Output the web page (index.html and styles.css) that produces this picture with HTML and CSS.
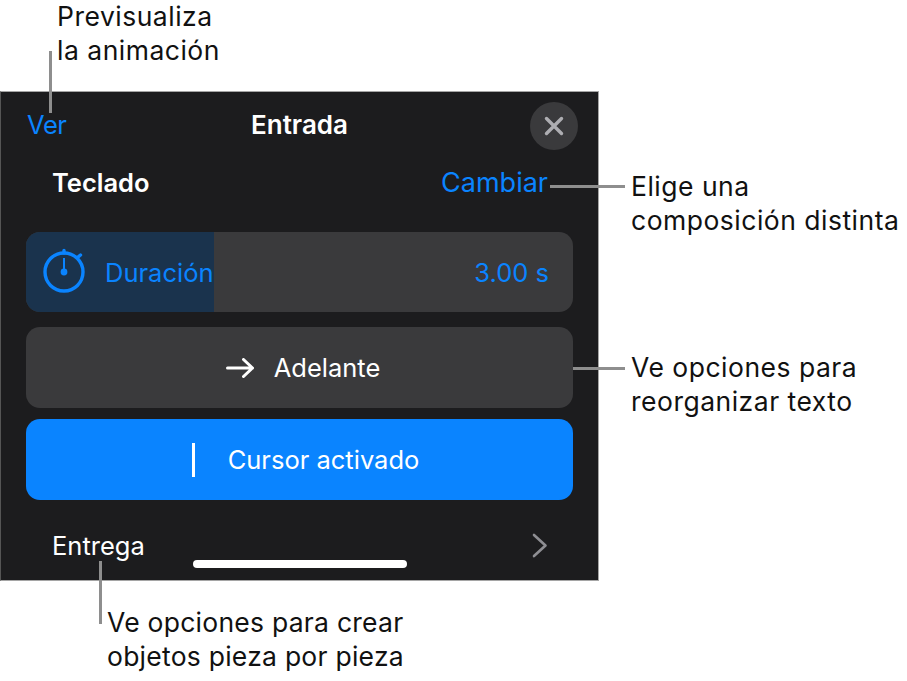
FILE: index.html
```html
<!DOCTYPE html>
<html lang="es">
<head>
  <meta charset="UTF-8">
  <meta name="viewport" content="width=device-width, initial-scale=1.0">
  <title>Entrada</title>
  <link rel="stylesheet" href="styles.css">
</head>
<body>
  <div class="figure">
    <p class="note note-top">Previsualiza<br>la animación</p>

    <div class="panel">
      <div class="header">
        <span class="link header-link">Ver</span>
        <span class="title">Entrada</span>
        <span class="close">
          <svg width="22" height="22" viewBox="0 0 22 22"><path d="M3.5 3.5l15 15M18.5 3.5l-15 15" fill="none" stroke="#aeaeb2" stroke-width="3.4" stroke-linecap="round"/></svg>
        </span>
      </div>

      <div class="subheader">
        <span class="subtitle">Teclado</span>
        <span class="link change-link">Cambiar</span>
      </div>

      <div class="row row-duration">
        <div class="fill" style="width: 188px"></div>
        <svg class="stopwatch" width="46" height="48" viewBox="0 0 46 48">
          <circle cx="23" cy="26" r="19" fill="none" stroke="#0a84ff" stroke-width="3.4"/>
          <path d="M23 4.500v2.500M36.500 11.500l3-2.500" fill="none" stroke="#0a84ff" stroke-width="3.4" stroke-linecap="round"/>
          <path d="M23 12v14" fill="none" stroke="#0a84ff" stroke-width="2"/>
          <circle cx="23" cy="26" r="3.400" fill="#0a84ff"/>
        </svg>
        <span class="link duration-label">Duración</span>
        <span class="link duration-value">3.00 s</span>
      </div>

      <div class="row row-forward">
        <svg width="28" height="20" viewBox="0 0 28 20"><path d="M1.5 10h25M17.5 1.5l9 8.500-9 8.500" fill="none" stroke="#fff" stroke-width="3" stroke-linecap="round" stroke-linejoin="round"/></svg>
        <span>Adelante</span>
      </div>

      <div class="row row-cursor">
        <span class="cursor-bar"></span>
        <span>Cursor activado</span>
      </div>

      <div class="footer">
        <span>Entrega</span>
        <svg width="16" height="25" viewBox="0 0 16 25"><path d="M2 2l11.500 10.500L2 23" fill="none" stroke="#8e8e93" stroke-width="2.600" stroke-linecap="round" stroke-linejoin="round"/></svg>
      </div>

      <div class="home-bar"></div>
    </div>

    <p class="note note-bottom">Ve opciones para crear<br>objetos pieza por pieza</p>

    <p class="note note-side note-layout">Elige una<br>composición distinta</p>
    <p class="note note-side note-reflow">Ve opciones para<br>reorganizar texto</p>

    <span class="leader leader-ver"></span>
    <span class="leader leader-change"></span>
    <span class="leader leader-forward"></span>
    <span class="leader leader-build"></span>
  </div>
</body>
</html>
```

FILE: styles.css
```css
body { margin: 0; background: #fff; font-family: Inter, "Liberation Sans", sans-serif; }
.figure { position: relative; width: 907px; height: 681px; overflow: hidden; }

.note { margin: 0; font-size: 26.500px; line-height: 34px; letter-spacing: 0.5px; color: #111; }
.note-top { margin-top: -1px; padding-left: 57px; }
.note-bottom { margin-top: 24px; padding-left: 107px; letter-spacing: 0.25px; }
.note-side { position: absolute; left: 631px; }
.note-layout { top: 169px; }
.note-reflow { top: 350px; }

.leader { position: absolute; background: #8e8e8e; }
.leader-ver { left: 49px; top: 51px; width: 3px; height: 62px; }
.leader-change { left: 550px; top: 185px; width: 75px; height: 3px; }
.leader-forward { left: 573px; top: 367px; width: 52px; height: 3px; }
.leader-build { left: 99px; top: 561px; width: 3px; height: 63px; }

.panel { position: relative; box-sizing: border-box; width: 599px; height: 490px; margin-top: 24px; padding-top: 10px; background: #1c1c1e; border: 1px solid #a5a5a5; border-left-color: #555; color: #fff; font-size: 25.500px; }
.link { color: #0a84ff; }

.header { position: relative; display: flex; align-items: center; justify-content: space-between; height: 48px; padding: 0 20px 0 26px; }
.header-link { margin-bottom: 3px; letter-spacing: -0.4px; }
.title { position: absolute; left: 0; right: 0; padding-bottom: 3px; text-align: center; font-size: 26px; font-weight: 600; }
.close { display: flex; align-items: center; justify-content: center; width: 48px; height: 48px; border-radius: 50%; background: #3a3a3c; }

.subheader { display: flex; align-items: center; justify-content: space-between; height: 38px; margin: 13px 50px 31px 51px; }
.subtitle { font-weight: 600; }
.change-link { font-size: 27px; }

.row { position: relative; display: flex; align-items: center; margin: 0 25px; background: #3a3a3c; border-radius: 14px; overflow: hidden; }
.row-duration { height: 80px; padding: 0 24px 0 15px; }
.fill { position: absolute; left: 0; top: 0; bottom: 0; background: #1a334d; }
.stopwatch { position: relative; margin-top: -4px; }
.duration-label { position: relative; margin-left: 18px; }
.duration-value { position: relative; margin-left: auto; }

.row-forward { justify-content: center; gap: 20px; height: 81px; margin-top: 15px; padding-left: 7px; }
.row-cursor { justify-content: center; gap: 33px; height: 81px; margin-top: 11px; padding-left: 12px; background: #0a84ff; }
.cursor-bar { width: 3px; height: 34px; background: #fff; }

.footer { display: flex; align-items: center; justify-content: space-between; height: 38px; margin: 26px 50px 0 51px; }
.home-bar { position: absolute; left: 192px; bottom: 12px; width: 214px; height: 8px; border-radius: 4px; background: #fff; }
```
